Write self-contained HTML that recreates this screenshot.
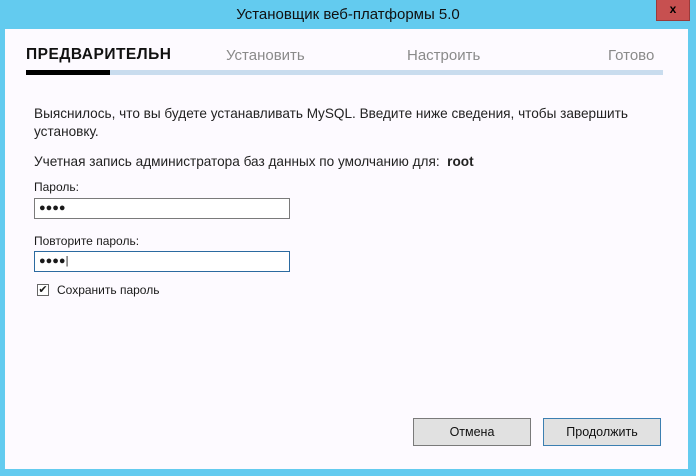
<!DOCTYPE html>
<html><head><meta charset="utf-8"><style>
*{margin:0;padding:0;box-sizing:border-box}
body{width:696px;height:476px;background:#63cbef;position:relative;overflow:hidden;font-family:"Liberation Sans","DejaVu Sans",sans-serif;color:#1a1a1a}
.a{position:absolute;white-space:nowrap}
#title{left:0;width:696px;top:6px;text-align:center;font-size:15px;color:#111}
#close{left:656px;top:0;width:34px;height:21px;background:#c75050;border:1px solid #9a3a3a;border-top:none;color:#000;font-weight:bold;font-size:12px;text-align:center;line-height:19px}
#win{left:5px;top:29px;width:683px;height:440px;background:#fdfaff}
.tab{top:47px;font-size:15px;color:#8a8a8a}
#bar{left:26px;top:70px;width:637px;height:5px;background:#c9dcee}
#bar i{display:block;width:84px;height:5px;background:#000}
.t{font-size:13.6px;color:#222}
.in{left:34px;width:256px;height:21px;background:#fff;border:1px solid #7a7a7a;font-size:11px;letter-spacing:0px;padding-left:4px;line-height:18px}
.btn{top:418px;width:118px;height:28px;background:#e1e1e1;border:1px solid #7a7a7a;text-align:center;font-size:12.5px;line-height:26px;color:#111}
</style></head><body>
<div class="a" id="title">Установщик веб-платформы 5.0</div>
<div class="a" id="close">x</div>
<div class="a" id="win"></div>
<div class="a tab" style="left:26px;color:#111;font-weight:bold;letter-spacing:0.5px;font-size:15.5px;top:46px">ПРЕДВАРИТЕЛЬН</div>
<div class="a tab" style="left:226px">Установить</div>
<div class="a tab" style="left:407px">Настроить</div>
<div class="a tab" style="left:608px">Готово</div>
<div class="a" id="bar"><i></i></div>
<div class="a t" style="left:34px;top:106px">Выяснилось, что вы будете устанавливать MySQL. Введите ниже сведения, чтобы завершить</div>
<div class="a t" style="left:34px;top:124px">установку.</div>
<div class="a t" style="left:34px;top:154px">Учетная запись администратора баз данных по умолчанию для:&nbsp; <b>root</b></div>
<div class="a" style="left:34px;top:180px;font-size:12px">Пароль:</div>
<div class="a in" style="top:198px">●●●●</div>
<div class="a" style="left:34px;top:234px;font-size:12px">Повторите пароль:</div>
<div class="a in" style="top:251px;border-color:#2b6aa0">●●●●|</div>
<div class="a" style="left:37px;top:284px;width:12px;height:12px;border:1px solid #666;background:#fff;font-size:11px;line-height:10px;text-align:center">✔</div>
<div class="a" style="left:57px;top:283px;font-size:12px">Сохранить пароль</div>
<div class="a btn" style="left:413px">Отмена</div>
<div class="a btn" style="left:543px;border-color:#3c7fb1">Продолжить</div>
</body></html>
